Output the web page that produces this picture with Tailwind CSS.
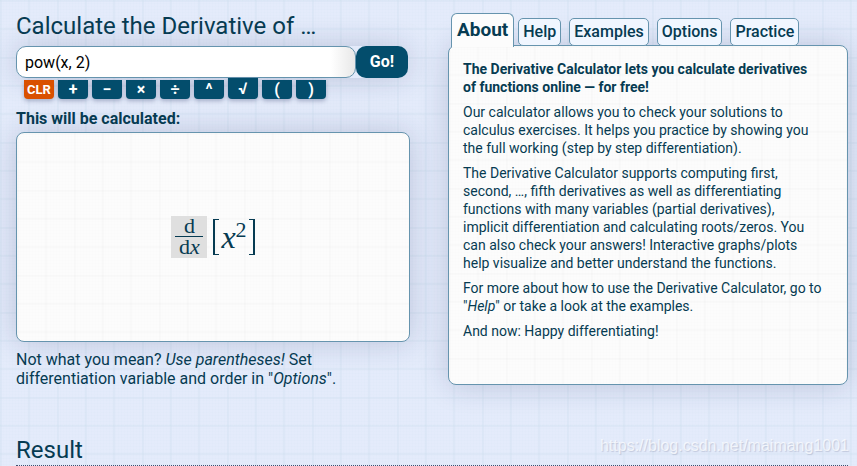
<!DOCTYPE html>
<html lang="en">
<head>
    <meta charset="UTF-8">
    <meta name="viewport" content="width=device-width, initial-scale=1.0">
    <title>Derivative Calculator</title>
    <script src="https://cdn.jsdelivr.net/npm/@tailwindcss/browser@4"></script>
    <style>
        /* graph paper: 85px tile, three squares each way */
        .paper, .paper-card {
            background-image:
                linear-gradient(to right, var(--line) 2px, transparent 2px 28px, var(--line) 28px 30px, transparent 30px 57px, var(--line) 57px 59px, transparent 59px),
                linear-gradient(to bottom, var(--line) 2px, transparent 2px 28px, var(--line) 28px 30px, transparent 30px 57px, var(--line) 57px 59px, transparent 59px),
                repeating-linear-gradient(to right, var(--fine) 0 1px, transparent 1px 3px),
                repeating-linear-gradient(to bottom, var(--fine) 0 1px, transparent 1px 3px);
            background-size: 85px 85px;
        }
        .paper { --line: rgba(205, 222, 238, .3); --fine: rgba(200, 218, 235, .05); }
        .paper-card { --line: rgba(0, 0, 0, .011); --fine: rgba(0, 0, 0, .003); }
    </style>
</head>
<body class="paper relative min-h-screen overflow-x-hidden bg-[#e4ebfb] font-['Roboto',sans-serif] text-[#063b52]">
    <main class="pl-4 pr-[9px]">
        <div class="grid grid-cols-[394fr_400fr] gap-[38px]">
            <section class="pt-[11px]">
                <h1><label for="expr" class="block text-2xl leading-[30px]">Calculate the Derivative of …</label></h1>
                <form class="pr-0.5" onsubmit="return false">
                    <div class="mt-[5px] flex rounded-xl shadow-[0_0_30px_rgba(30,40,90,0.2)]">
                        <input id="expr" type="text" value="pow(x, 2)" class="h-8 min-w-0 flex-1 rounded-[10px] border border-[#6694ae] bg-white bg-linear-to-l from-[#e8e8e8] to-white to-[24px] px-2 text-base text-black outline-none">
                        <button type="submit" class="h-8 w-[52px] rounded-[10px] bg-[#034d6c] text-base font-bold text-white">Go!</button>
                    </div>
                    <div class="flex h-[21px] items-end gap-1 pl-2 text-base font-bold text-white *:w-[30px] *:rounded-b *:shadow-[0_2px_4px_rgba(30,40,90,0.3)]">
                        <button type="button" class="h-[19px] bg-[#d95000] text-[13px] leading-[19px]">CLR</button>
                        <button type="button" class="h-[19px] bg-[#034d6c] leading-[19px]">+</button>
                        <button type="button" class="h-[19px] bg-[#034d6c] leading-[19px]">−</button>
                        <button type="button" class="h-[19px] bg-[#034d6c] leading-[19px]">×</button>
                        <button type="button" class="h-[19px] bg-[#034d6c] leading-[19px]">÷</button>
                        <button type="button" class="h-[19px] bg-[#034d6c] leading-[19px]">^</button>
                        <button type="button" class="h-[21px] bg-[#034d6c] leading-[21px]">√</button>
                        <button type="button" class="h-[19px] bg-[#034d6c] leading-[19px]">(</button>
                        <button type="button" class="h-[19px] bg-[#034d6c] leading-[19px]">)</button>
                    </div>
                </form>
                <h2 class="mt-[10px] text-base leading-5 font-bold">This will be calculated:</h2>
                <div class="paper-card mt-[3px] flex h-[210px] items-center justify-center rounded-lg border border-[#6694ae] bg-[#fcfcfc] font-['Liberation_Serif',serif] shadow-[0_0_30px_rgba(30,40,90,0.2)]">
                    <div class="flex items-center gap-[6px]">
                        <div class="w-9 bg-[#dfdfdf] px-1 text-center text-[22px] leading-5">
                            <div class="h-[21px] border-b border-current">d</div>
                            <div class="h-[21px]">d<i>x</i></div>
                        </div>
                        <div class="flex h-9 items-center">
                            <span class="h-9 w-[6px] border-y border-l-2 border-current"></span>
                            <span class="px-0.5 text-[32px] leading-9"><i>x</i><sup class="text-[22px]">2</sup></span>
                            <span class="h-9 w-[6px] border-y border-r-2 border-current"></span>
                        </div>
                    </div>
                </div>
                <p class="mt-2 text-base leading-[19px]">Not what you mean? <i>Use parentheses!</i> Set differentiation variable and order in "<i>Options</i>".</p>
            </section>

            <section class="pt-[13px]">
                <div role="tablist" class="relative z-10 flex items-end pl-[3px] text-base font-bold">
                    <button role="tab" aria-selected="true" class="-mb-px h-[34px] rounded-t-md border border-b-0 border-[#6694ae] bg-[#fcfcfc] px-[5px] text-[19px]">About</button>
                    <button role="tab" class="ml-1 h-7 rounded-[5px] border border-[#6694ae] bg-[#f0f6ff] px-1 font-medium">Help</button>
                    <button role="tab" class="ml-2 h-7 rounded-[5px] border border-[#6694ae] bg-[#f0f6ff] px-1 font-medium">Examples</button>
                    <button role="tab" class="ml-2 h-7 rounded-[5px] border border-[#6694ae] bg-[#f0f6ff] px-1 font-medium">Options</button>
                    <button role="tab" class="ml-2 h-7 rounded-[5px] border border-[#6694ae] bg-[#f0f6ff] px-1 font-medium">Practice</button>
                </div>
                <div role="tabpanel" class="paper-card -mt-px min-h-[340px] space-y-[7px] rounded-lg border border-[#6694ae] bg-[#fcfcfc] px-[14px] pt-[14px] text-sm leading-[18px] shadow-[0_0_30px_rgba(30,40,90,0.2)]">
                    <p class="font-bold">The Derivative Calculator lets you calculate derivatives<br>of functions online — for free!</p>
                    <p>Our calculator allows you to check your solutions to<br>calculus exercises. It helps you practice by showing you<br>the full working (step by step differentiation).</p>
                    <p>The Derivative Calculator supports computing first,<br>second, …, fifth derivatives as well as differentiating<br>functions with many variables (partial derivatives),<br>implicit differentiation and calculating roots/zeros. You<br>can also check your answers! Interactive graphs/plots<br>help visualize and better understand the functions.</p>
                    <p>For more about how to use the Derivative Calculator, go to<br>"<i>Help</i>" or take a look at the examples.</p>
                    <p>And now: Happy differentiating!</p>
                </div>
            </section>
        </div>

        <h2 class="mt-[48px] border-b border-dotted border-[#405070] text-2xl leading-[29px]">Result</h2>
    </main>
    <div class="absolute right-2 bottom-2 font-['Liberation_Sans',sans-serif] text-base text-white/70 [text-shadow:1px_1px_1px_rgba(90,100,130,0.25)]">https://blog.csdn.net/maimang1001</div>
</body>
</html>
